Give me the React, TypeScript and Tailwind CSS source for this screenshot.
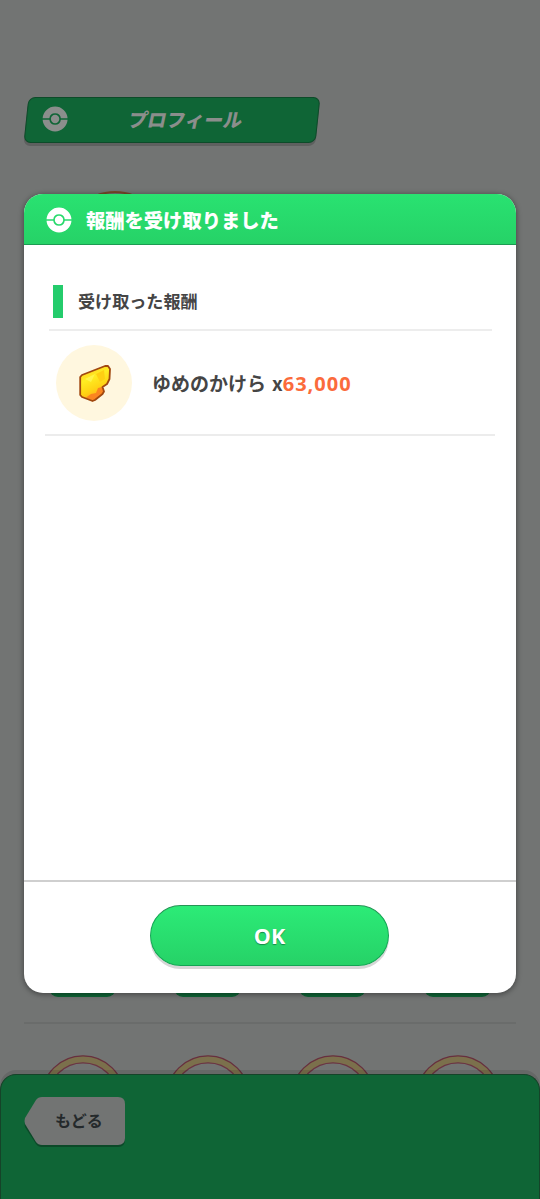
import React from 'react';

const FONT = "font-['Noto_Sans_CJK_JP',sans-serif]";

const BallIcon: React.FC<{ className?: string }> = ({ className }) => (
  <svg viewBox="0 0 26 26" className={className} fill="currentColor">
    <path d="M.53 12.2A12.5 12.5 0 0 1 25.47 12.2H18.75A5.8 5.8 0 0 0 7.25 12.2Z" />
    <path d="M.53 13.8A12.5 12.5 0 0 0 25.47 13.8H18.75A5.8 5.8 0 0 1 7.25 13.8Z" />
    <circle cx="13" cy="13" r="4.2" />
  </svg>
);

const ShardIcon: React.FC<{ className?: string }> = ({ className }) => (
  <svg viewBox="0 0 34 38" className={className}>
    <defs>
      <linearGradient id="shard" x1="0.2" y1="0" x2="0.6" y2="1">
        <stop offset="0" stopColor="#ffc51f" />
        <stop offset="0.35" stopColor="#ffed22" />
        <stop offset="0.65" stopColor="#ffd414" />
        <stop offset="1" stopColor="#ff9d1c" />
      </linearGradient>
    </defs>
    <path
      d="M4 11 27 2 30 2 32 5 31.5 15 29 20 24.5 23 26 27.5 24.5 30 17 36 14.5 37 4 33 2.2 31V13Z"
      fill="url(#shard)"
    />
    <path d="M8 33.5 13 30 18 29 20 24 24 23 26 28 17 36 14 36.5Z" fill="#fb8520" />
    <path d="M7 15 17 10 13 18Z" fill="#fff34a" />
    <path d="M18 10 26 6 27 15 22 18Z" fill="#ffcf13" />
    <path
      d="M4 11 27 2 30 2 32 5 31.5 15 29 20 24.5 23 26 27.5 24.5 30 17 36 14.5 37 4 33 2.2 31V13Z"
      fill="none"
      stroke="#a1480f"
      strokeWidth="1.8"
      strokeLinejoin="round"
    />
  </svg>
);

const RingIcon: React.FC = () => (
  <svg viewBox="0 0 84 84" className="h-[84px] w-[84px] shrink-0" fill="none">
    <circle cx="42" cy="42" r="37.7" stroke="#7b704c" strokeWidth="7.4" />
    <circle cx="42" cy="42" r="41.2" stroke="#672f3f" strokeWidth="1.3" />
    <circle cx="42" cy="42" r="34.2" stroke="#6b3444" strokeWidth="1.3" />
  </svg>
);

const ProfileScreen: React.FC = () => (
  <div className="flex h-full flex-col bg-[#727473]">
    <div className="mt-[97px] ml-[26px] flex h-[46px] w-[292px] shrink-0 -skew-x-[6deg] items-center rounded-[7px] border border-[#0d4b29] bg-[#0f6536] shadow-[0_3px_0_#5e605f] text-[#8b8e8c]">
      <BallIcon className="ml-[15px] h-[26px] w-[26px] -translate-y-px skew-x-[6deg]" />
      <span className="ml-[61px] -translate-y-0.5 -skew-x-[6deg] text-[19px] leading-none font-black">プロフィール</span>
    </div>

    {/* top of the portrait ring that shows above the dialog */}
    <div className="mt-[48px] ml-[65px] h-[100px] w-[100px] shrink-0 rounded-full border-2 border-[#764829]" />

    <div className="mt-[682px] ml-[49px] flex shrink-0 gap-[58px]">
      {[0, 1, 2, 3].map((i) => (
        <div key={i} className="h-6 w-[67px] shrink-0 rounded-[9px] bg-[#0f6536]" />
      ))}
    </div>
    <div className="mx-6 mt-[25px] h-0.5 shrink-0 bg-[#6a6c6b]" />
    <div className="mt-[31px] ml-[41px] flex h-[19px] shrink-0 gap-[41px] overflow-hidden">
      {[0, 1, 2, 3].map((i) => (
        <RingIcon key={i} />
      ))}
    </div>

    <div className="h-[125px] shrink-0 rounded-t-[16px] border border-b-0 border-[#164329] bg-[#0f6536] pt-[22px] pl-[23px] shadow-[0_-4px_0_rgba(0,0,0,0.1)]">
      <button className="relative flex h-12 w-[102px] items-center text-[#24292b]">
        <svg viewBox="0 0 102 52" className="absolute top-0 left-0 h-[52px] w-[102px]">
          <path d="M18 2.5H94Q101 2.5 101 9.5V43Q101 50 94 50H18Q14 50 12 47L1 30Q0 27 1 25L12 6Q14 2.5 18 2.5Z" fill="#0b4928" />
          <path d="M18 0H94Q101 0 101 7V41Q101 48 94 48H18Q14 48 12 45L1 27Q0 24 1 21L12 3Q14 0 18 0Z" fill="#727473" />
        </svg>
        <span className="relative ml-[31px] -translate-y-px text-[16px] leading-none font-bold">もどる</span>
      </button>
    </div>
  </div>
);

const RewardDialog: React.FC = () => (
  <div className="flex h-[799px] w-[492px] flex-col overflow-hidden rounded-[19px] bg-white shadow-[0_1px_5px_1px_rgba(0,0,0,0.35)]">
    <header className="flex h-[51px] shrink-0 items-center border-b border-[#1c9b52] bg-linear-to-b from-[#29e271] to-[#26d267] pt-px text-white">
      <BallIcon className="ml-[22px] h-[26px] w-[26px]" />
      <h1 className="ml-[14px] translate-y-[0.5px] text-[19.3px] leading-none font-black">報酬を受け取りました</h1>
    </header>

    <div className="flex-1">
      <div className="mt-10 ml-[29px] flex items-center">
        <div className="h-[33px] w-2.5 bg-[#24cc6c]" />
        <h2 className="ml-[15px] -translate-y-px text-[17.1px] leading-none font-bold text-[#454545]">受け取った報酬</h2>
      </div>
      <div className="mt-[11px] mr-6 ml-[25px] h-0.5 bg-[#ededed]" />
      <div className="mt-[14px] ml-8 flex items-center">
        <div className="flex h-[76px] w-[76px] items-center justify-center rounded-full bg-[#fff7df] pl-px">
          <ShardIcon className="h-[38px] w-[34px]" />
        </div>
        <p className="ml-5 flex items-baseline text-[19px] leading-none font-bold text-[#454545]">
          ゆめのかけら
          <span className="ml-[6px]">x</span>
          <span className="font-['Open_Sans',sans-serif] text-[20px] tracking-[1px] text-[#fb6b3c]">63,000</span>
        </p>
      </div>
      <div className="mt-[13px] mr-[21px] ml-[21px] h-0.5 bg-[#ececec]" />
    </div>

    <footer className="flex h-[113px] shrink-0 justify-center border-t-2 border-[#cfcfcf] pt-[23px]">
      <button className="mr-px flex h-[61px] w-[239px] items-center justify-center rounded-full border border-[#13a553] border-t-[#269456] bg-linear-to-b from-[#2ceb77] to-[#26d267] font-['Open_Sans',sans-serif] text-[21.5px] font-bold text-white shadow-[0_3px_0_#d6d6d6] [text-shadow:0_1px_1px_#168847]">
        <span className="leading-none">OK</span>
      </button>
    </footer>
  </div>
);

const App: React.FC = () => (
  <div className={`relative h-[1199px] w-[540px] overflow-hidden ${FONT}`}>
    <ProfileScreen />
    <div className="absolute inset-0 flex items-start justify-center pt-[194px]">
      <RewardDialog />
    </div>
  </div>
);

export default App;
